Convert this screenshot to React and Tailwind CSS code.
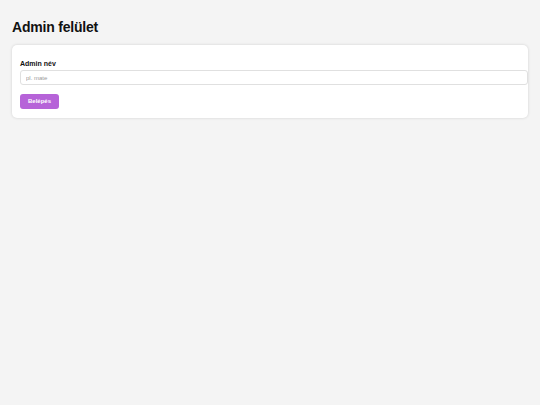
export default function App() {
  return (
    <div className="min-h-[405px] bg-[#f4f4f4] px-[12px] pt-[19px] font-['Liberation_Sans',Arial,sans-serif]">
      <h1 className="text-[14px] leading-[16px] tracking-[-0.2px] font-bold text-[#111] mb-[10px]">Admin felület</h1>
      <div className="bg-white rounded-[5px] shadow-[0_0_3px_rgba(0,0,0,0.15)] px-[8px] pt-[15px] pb-[8px]">
        <label className="block text-[7px] leading-[8px] font-bold text-[#111] mb-[2px]">Admin név</label>
        <input
          type="text"
          placeholder="pl. mate"
          className="block w-[calc(100%+8px)] h-[15px] border border-[#e0e0e0] rounded-[3px] px-[5px] text-[6px] text-[#333] placeholder:text-[#9a9a9a] outline-none"
        />
        <button className="mt-[9px] w-[39px] h-[15px] rounded-[3px] bg-[#b663d8] text-white text-[6px] font-bold">
          Belépés
        </button>
      </div>
    </div>
  );
}
